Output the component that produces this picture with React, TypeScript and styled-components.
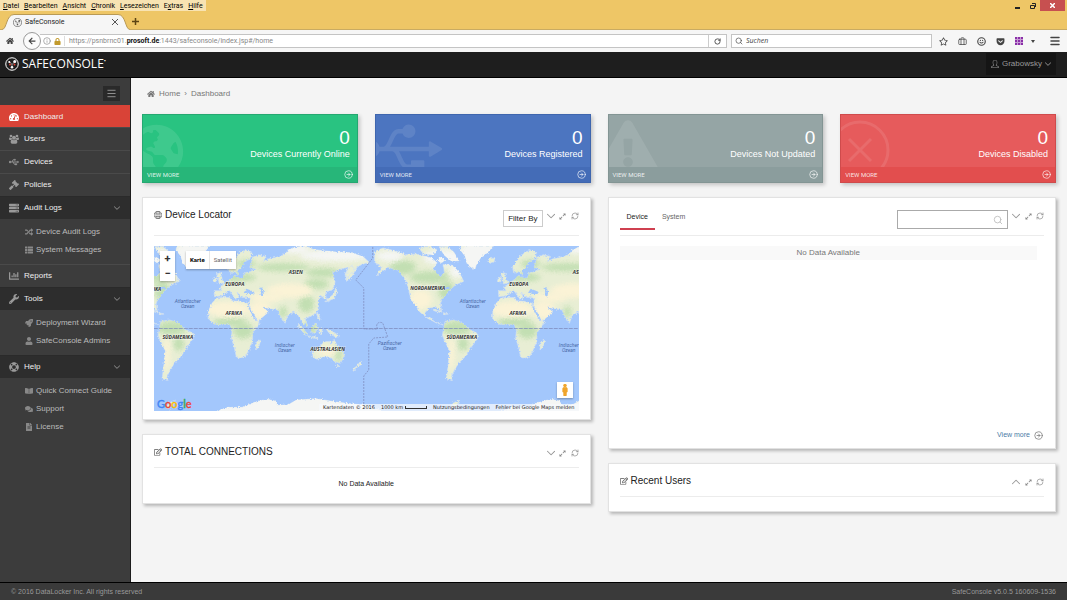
import React from 'react';
import styled, { createGlobalStyle, css } from 'styled-components';
import {
  FaTachometerAlt, FaUsb, FaGavel, FaServer, FaRandom, FaThList, FaChartBar, FaWrench,
  FaRocket, FaUser, FaLifeRing, FaBookOpen, FaComments, FaFileAlt, FaHome, FaGlobeAmericas,
  FaExclamationTriangle, FaExpandAlt, FaRegEdit, FaMale, FaArrowLeft, FaRegStar, FaGetPocket, FaLock,
} from 'react-icons/fa';
import { SlArrowDown, SlArrowUp, SlUser, SlGlobe } from 'react-icons/sl';
import { CircleArrowRight, RefreshCw, Search, Briefcase, Smile, Menu, RotateCw, Info } from 'lucide-react';

const SANS = '"Liberation Sans", Arial, sans-serif';
const UI = '"Open Sans", "Noto Sans", sans-serif';

const Global = createGlobalStyle`
  *, *::before, *::after { box-sizing: border-box; }
  body { margin: 0; background: #f4f4f4; font: 8px/12px ${SANS}; color: #333; }
  button, input { font: inherit; color: inherit; margin: 0; }
  button { background: none; border: 0; padding: 0; cursor: pointer; }
  a { color: inherit; text-decoration: none; }
  h2 { margin: 0; font-weight: normal; }
  ul { list-style: none; margin: 0; padding: 0; }
  svg { display: block; flex: none; }
`;

/* ---------- browser window ---------- */

const Window = styled.div`
  display: flex;
  flex-direction: column;
  min-height: 100vh;
`;

const Chrome = styled.div`
  background: #eec666;
  font-family: Roboto, ${UI};
  font-size: 7px;
  color: #222;
`;

const MenuBar = styled.div`
  display: flex;
  justify-content: space-between;
  height: 11px;
`;

const Menus = styled.nav`
  display: flex;
  gap: 5px;
  padding: 0 3px;
  background: #f8e3b2;
  line-height: 12px;
  color: #000;
  u { text-decoration-thickness: 1px; text-underline-offset: 1px; }
`;

const WindowControls = styled.div`
  display: flex;
  align-items: stretch;
  padding-right: 2px;
`;

const WindowButton = styled.button<{ $close?: boolean }>`
  display: flex;
  align-items: center;
  justify-content: center;
  width: ${p => (p.$close ? 25 : 15)}px;
  background: ${p => (p.$close ? '#c75050' : 'transparent')};
  color: ${p => (p.$close ? '#fff' : '#222')};
`;

const TabStrip = styled.div`
  display: flex;
  align-items: flex-end;
  gap: 2px;
  height: 19px;
  padding-left: 2px;
  border-bottom: 1px solid #c9ab62;
`;

const BrowserTab = styled.div`
  position: relative;
  display: flex;
  align-items: center;
  gap: 3px;
  width: 128px;
  height: 16px;
  margin-bottom: -1px;
  padding: 0 12px 0 11px;
  > * { position: relative; }
  span { flex: 1; }
`;

const TabShape = styled.svg`
  && { position: absolute; inset: 0; }
`;

const Toolbar = styled.div`
  display: flex;
  align-items: center;
  height: 22px;
  padding: 0 6px;
  background: #f6f6f6;
  color: #444;
`;

const BackButton = styled.button`
  display: flex;
  align-items: center;
  justify-content: center;
  width: 18px;
  height: 18px;
  margin-left: 9px;
  border: 1px solid #999;
  border-radius: 50%;
  background: #fbfbfb;
  z-index: 1;
`;

const AddressBar = styled.div`
  display: flex;
  align-items: center;
  flex: 1;
  gap: 3px;
  height: 14px;
  margin-left: -1px;
  padding-left: 3px;
  border: 1px solid #c4c4c4;
  border-left: 0;
  background: #fff;
  color: #888;
`;

const Address = styled.div`
  flex: 1;
  padding-left: 4px;
  border-left: 1px solid #ddd;
  line-height: 10px;
  white-space: nowrap;
  outline: 0;
  b { color: #111; }
`;

const Reload = styled.button`
  display: flex;
  align-items: center;
  justify-content: center;
  width: 18px;
  height: 12px;
  border-left: 1px solid #ccc;
  color: #444;
`;

const BrowserSearch = styled.label`
  display: flex;
  align-items: center;
  gap: 3px;
  width: 201px;
  height: 14px;
  margin: 0 7px 0 4px;
  padding: 0 3px;
  border: 1px solid #c4c4c4;
  background: #fff;
  input {
    flex: 1;
    min-width: 0;
    padding: 0;
    border: 0;
    outline: 0;
    font-family: ${UI};
    font-style: italic;
  }
`;

const ToolbarIcons = styled.div`
  display: flex;
  align-items: center;
  gap: 10px;
`;

const ListMenu = styled.span`
  display: flex;
  align-items: center;
  gap: 8px;
  padding-right: 4px;
`;

const Grid9 = styled.span`
  display: grid;
  grid-template-columns: repeat(3, 2px);
  gap: 1px;
  background: #c79ad4;
  i { height: 2px; background: #8a2fa8; }
`;

const Caret = styled.span`
  border: 2px solid transparent;
  border-top: 3px solid #444;
  border-bottom: 0;
`;

/* ---------- app header ---------- */

const Header = styled.header`
  display: flex;
  align-items: center;
  justify-content: space-between;
  height: 26px;
  padding: 0 11px 2px 5px;
  background: #1e1e1e;
  border-bottom: 1px solid #000;
`;

const Brand = styled.a`
  display: flex;
  align-items: center;
  gap: 3px;
  font: 12px/16px ${UI};
  color: #fff;
  sup { font-size: 6px; line-height: 6px; vertical-align: 5px; }
`;

const UserMenu = styled.button`
  display: flex;
  align-items: center;
  gap: 3px;
  height: 22px;
  padding: 0 5px;
  background: #151515;
  color: #999;
`;

/* ---------- sidebar ---------- */

const Body = styled.div`
  display: flex;
  flex: 1;
`;

const Sidebar = styled.nav`
  flex: none;
  width: 131px;
  background: #3c3c3c;
  border-right: 1px solid #1c1c1c;
  color: #eee;
`;

const ToggleRow = styled.div`
  display: flex;
  justify-content: flex-end;
  height: 27px;
  padding: 8px 10px 4px 0;
`;

const Toggle = styled.button`
  display: flex;
  align-items: center;
  justify-content: center;
  width: 17px;
  background: #2a2a2a;
  color: #999;
`;

const NavLink = styled.a<{ $state?: 'active' | 'open' }>`
  display: flex;
  align-items: center;
  gap: 5px;
  height: 23px;
  padding: 0 10px 0 9px;
  border-top: 1px solid #4a4a4a;
  > svg { color: #999; }
  span { flex: 1; }
  ${p => p.$state === 'open' && css`background: #2d2d2d; border-color: #2a2a2a;`}
  ${p => p.$state === 'active' && css`
    height: 22px;
    background: #d94337;
    border-color: #d94337;
    > svg { color: #fff; }
  `}
`;

const SubMenu = styled.ul`
  padding: 4px 0 5px;
`;

const SubLink = styled.a`
  display: flex;
  align-items: center;
  gap: 3px;
  height: 18px;
  padding-left: 25px;
  color: #bbb;
  svg { color: #888; }
`;

/* ---------- content ---------- */

const Main = styled.main`
  flex: 1;
  min-width: 0;
  padding: 10px 11px 20px;
`;

const Crumbs = styled.nav`
  display: flex;
  align-items: center;
  gap: 4px;
  padding: 0 5px;
  color: #777;
`;

const Cards = styled.div`
  display: grid;
  grid-template-columns: repeat(4, 1fr);
  gap: 17px;
  margin-top: 14px;
`;

const Card = styled.a<{ $bg: string; $edge: string }>`
  display: block;
  height: 69px;
  border: 1px solid ${p => p.$edge};
  background: ${p => p.$bg};
  box-shadow: 2px 2px 4px rgba(0, 0, 0, 0.2);
  color: #fff;
`;

const CardBody = styled.div`
  position: relative;
  overflow: hidden;
  height: 52px;
  padding: 13px 7px 0;
  text-align: right;
  font-size: 9px;
  strong { display: block; font-size: 19px; line-height: 20px; font-weight: normal; }
  span { position: relative; }
`;

const Watermark = styled.div<{ $x: number; $y: number }>`
  position: absolute;
  left: ${p => p.$x}px;
  top: ${p => p.$y}px;
  color: rgba(255, 255, 255, 0.1);
`;

const CardFoot = styled.div<{ $bg: string }>`
  display: flex;
  align-items: center;
  justify-content: space-between;
  height: 15px;
  padding: 0 4px;
  background: ${p => p.$bg};
  font: 6px/8px Roboto, ${SANS};
  color: rgba(255, 255, 255, 0.85);
`;

const Columns = styled.div`
  display: grid;
  grid-template-columns: 1fr 1fr;
  align-items: start;
  gap: 17px;
  margin-top: 14px;
`;

const Column = styled.div`
  display: grid;
  gap: 14px;
  min-width: 0;
`;

const Panel = styled.section<{ $min?: number }>`
  display: flex;
  flex-direction: column;
  min-height: ${p => p.$min ?? 0}px;
  padding: 0 11px;
  background: #fff;
  border: 1px solid #e2e2e2;
  box-shadow: 2px 2px 3px rgba(0, 0, 0, 0.25);
`;

const PanelHead = styled.div<{ $tall?: boolean }>`
  display: flex;
  align-items: flex-start;
  min-height: ${p => (p.$tall ? 38 : 33)}px;
  padding: 11px 0 4px;
  border-bottom: 1px solid #ececec;
`;

const PanelTitle = styled.h2`
  display: flex;
  align-items: center;
  flex: 1;
  gap: 3px;
  font-size: 10px;
  line-height: 12px;
  color: #222;
  svg { color: #555; }
`;

const Tools = styled.div`
  display: flex;
  gap: 4px;
  margin: 3px 0 0 4px;
  color: #888;
  button { display: grid; place-items: center; width: 8px; height: 8px; }
`;

const FilterButton = styled.button`
  height: 17px;
  margin-top: 1px;
  padding: 0 4px;
  border: 1px solid #ccc;
  color: #222;
`;

const Tabs = styled.div`
  display: flex;
  flex: 1;
  font-size: 7px;
`;

const PanelTab = styled.button<{ $on?: boolean }>`
  height: 21px;
  padding: 0 7px 4px;
  color: ${p => (p.$on ? '#222' : '#666')};
  border-bottom: 2px solid ${p => (p.$on ? '#cf4050' : 'transparent')};
`;

const PanelSearch = styled.label`
  display: flex;
  align-items: center;
  width: 111px;
  height: 19px;
  margin-top: 1px;
  padding: 0 4px;
  border: 1px solid #aaa;
  color: #bbb;
  input { flex: 1; min-width: 0; border: 0; outline: 0; padding: 0; color: #333; }
`;

const DataTable = styled.table`
  margin: 10px 7px 0 0;
  border-collapse: collapse;
  td { height: 14px; padding: 0; text-align: center; background: #f9f9f9; color: #777; }
`;

const Empty = styled.p`
  margin: 0;
  padding: 10px 0 13px;
  text-align: center;
  font-size: 7px;
  color: #222;
`;

const ViewMore = styled.a`
  display: flex;
  align-items: center;
  justify-content: flex-end;
  gap: 4px;
  margin: auto 1px 7px 0;
  font-size: 7px;
  color: #4a7ba6;
  svg { color: #777; }
`;

const Footer = styled.footer`
  display: flex;
  align-items: center;
  justify-content: space-between;
  height: 18px;
  padding: 0 11px;
  border-top: 1px solid #000;
  background: #3a3a3a;
  font-size: 7px;
  color: #999;
`;

/* ---------- map ---------- */

const MapBox = styled.div`
  position: relative;
  height: 165px;
  margin: 10px 0 8px;
  overflow: hidden;
  background: #a3c7fc;
  > svg { width: 100%; height: 100%; }
`;

const ZoomControl = styled.div`
  position: absolute;
  left: 6px;
  top: 5px;
  display: grid;
  width: 15px;
  background: #fff;
  box-shadow: 0 1px 2px rgba(0, 0, 0, 0.3);
  button { height: 15px; font: bold 11px/15px Roboto, sans-serif; color: #333; }
`;

const MapTypes = styled.div`
  position: absolute;
  left: 32px;
  top: 5px;
  display: flex;
  height: 18px;
  background: #fff;
  box-shadow: 0 1px 2px rgba(0, 0, 0, 0.3);
  font: 6px/8px Roboto, sans-serif;
  button { padding: 0 4px; color: #666; }
  button:first-child { font-weight: bold; color: #000; border-right: 1px solid #e6e6e6; }
`;

const StreetView = styled.button`
  position: absolute;
  right: 6px;
  bottom: 13px;
  display: flex;
  align-items: center;
  justify-content: center;
  width: 16px;
  height: 16px;
  background: #fff;
  box-shadow: 0 1px 2px rgba(0, 0, 0, 0.3);
`;

const GoogleMark = styled.a`
  position: absolute;
  left: 3px;
  bottom: 1px;
  font: 500 11px/13px Lato, sans-serif;
  -webkit-text-stroke: 0.3px currentColor;
`;

const Letter = styled.span<{ $c: string }>`
  color: ${p => p.$c};
`;

const Attribution = styled.div`
  position: absolute;
  right: 0;
  bottom: 0;
  display: flex;
  gap: 6px;
  height: 7px;
  padding: 0 4px;
  background: rgba(245, 248, 252, 0.75);
  font: 5px/7px "DejaVu Sans", sans-serif;
  color: #222;
  white-space: nowrap;
`;

const Scale = styled.span`
  display: flex;
  align-items: center;
  gap: 2px;
  &::after {
    content: '';
    width: 22px;
    height: 3px;
    border: 1px solid #333;
    border-top: 0;
  }
`;

/* Land outlines on a grid three times finer than the map, one world every 853 units. */
const LAND = [
  // Africa
  'M200 172L188 186 177 208 175 233 192 250 215 252 240 250 247 268 245 292 253 318 260 350 272 353 288 346 300 322 309 300 308 278 333 242 317 240 303 208 294 188 268 182 246 180 242 171 222 170Z',
  // Eurasia with Arabia, India and Indochina
  'M194 168L193 150 216 150 209 138 226 130 239 118 250 110 255 104 262 113 280 112 287 96 302 92 318 86 300 80 306 64 308 50 328 42 350 48 340 62 358 54 380 50 404 42 414 30 432 20 470 16 490 26 520 30 560 34 605 36 640 48 660 66 638 70 622 80 604 112 590 122 586 100 596 80 570 86 548 94 556 124 548 148 527 154 530 178 512 164 504 180 508 205 490 224 466 234 474 256 458 246 444 222 430 214 414 226 406 248 392 226 384 208 362 204 340 200 356 214 324 242 310 214 298 194 302 172 276 170 262 154 268 172 258 176 240 150 228 156 212 166Z',
  // Scandinavia
  'M238 92L236 78 250 58 268 36 292 28 308 38 300 56 284 62 276 84 264 104 256 92 246 98Z',
  // British Isles, Iceland, Japan, Kamchatka
  'M208 130L206 112 200 100 212 96 218 118 224 126Z', 'M190 122L194 110 202 112 200 124Z',
  'M162 58L170 50 182 54 180 64 168 68Z', 'M528 184L540 170 552 160 558 140 562 152 552 174Z',
  'M588 118L592 92 606 74 614 86Z',
  // Indonesia, Philippines, New Guinea
  'M446 248L474 280 468 284 446 258Z', 'M478 286L506 290 504 294 478 290Z', 'M482 262L500 248 504 262 496 278 484 274Z',
  'M508 264L518 264 514 282 508 278Z', 'M500 216L508 222 512 240 504 234Z', 'M530 266L548 272 570 286 560 290 540 280Z',
  // Australia, Tasmania, New Zealand, Madagascar
  'M488 330L510 318 522 304 540 302 544 312 553 296 562 314 578 328 584 346 572 368 552 362 546 352 526 348 502 356 490 350Z',
  'M560 374L568 374 564 380Z', 'M632 362L636 370 622 380 612 392 608 386 622 376Z', 'M318 306L332 298 328 318 318 328Z',
  // North America
  'M675 32L700 22 735 30 770 42 800 40 846 52 862 66 850 84 872 110 884 96 880 72 910 74 930 98 942 122 916 134 896 152 876 178 872 190 876 214 862 200 838 202 826 216 828 230 846 232 852 242 872 250 880 252 862 248 832 232 810 214 796 190 784 178 778 152 768 118 744 88 714 80 680 106 696 80 674 64Z',
  // Arctic archipelago and Greenland
  'M808 22L840 16 862 28 850 42 820 40Z', 'M868 18L890 16 912 34 928 60 906 62 884 44Z',
  'M934 14L1034 14 1018 34 996 46 972 86 954 72 946 46 932 28Z',
  'M862 60L872 50 886 58 876 66Z',
  // Cuba and Hispaniola
  'M850 206L876 212 874 216 852 210Z', 'M880 216L896 220 884 222Z',
  // South America
  'M886 242L912 238 938 246 954 262 986 280 978 302 960 326 948 346 928 366 914 388 904 410 908 420 890 414 894 384 900 330 886 304 878 284 882 262Z',
  // Antarctica
  'M190 516L236 500 280 500 316 484 350 476 374 480 386 494 416 492 440 478 500 474 560 484 610 490 650 494 690 508 720 530H190Z',
  'M903 498L912 486 930 478 922 492 912 506Z',
].join('');

const GREENS: [number, number, number, number][] = [
  [290, 70, 30, 12], [270, 110, 50, 12], [400, 80, 80, 12], [520, 96, 50, 14], [500, 130, 36, 16], [470, 190, 24, 26],
  [240, 244, 50, 14], [280, 270, 30, 24], [480, 262, 20, 20], [760, 80, 40, 22], [840, 110, 60, 18], [890, 150, 24, 30],
  [920, 262, 44, 22], [940, 310, 16, 20], [566, 340, 10, 26], [400, 214, 12, 18],
];
const SANDS: [number, number, number, number][] = [
  [235, 206, 64, 24], [330, 208, 34, 28], [420, 150, 70, 22], [350, 170, 50, 14], [812, 176, 34, 30], [532, 332, 30, 14], [904, 340, 10, 50],
];
const WHITES: [number, number, number, number][] = [
  [985, 46, 60, 48], [420, 502, 300, 38], [560, 44, 110, 18], [440, 26, 40, 14], [880, 50, 60, 24], [920, 92, 20, 20], [720, 46, 40, 16],
];

const World = ({ shift }: { shift: number }) => (
  <g transform={`translate(${shift} 0)`}>
    <g filter="url(#coast)">
      <path d={LAND} fill="#e8eed4" stroke="#cfe0f6" strokeWidth="2" />
      <g clipPath="url(#land)">
        {GREENS.map(([x, y, rx, ry], i) => <ellipse key={i} cx={x} cy={y} rx={rx} ry={ry} fill="#c2dfb2" filter="url(#soft)" />)}
        {SANDS.map(([x, y, rx, ry], i) => <ellipse key={i} cx={x} cy={y} rx={rx} ry={ry} fill="#fbf3d6" filter="url(#soft)" />)}
        {WHITES.map(([x, y, rx, ry], i) => <ellipse key={i} cx={x} cy={y} rx={rx} ry={ry} fill="#f5f6f4" filter="url(#soft)" />)}
      </g>
      <g fill="#a3c7fc">
        <path d="M282 156L290 144 300 148 314 154 310 160 292 160Z" />
        <path d="M328 142L338 140 342 156 340 168 332 164 334 152Z" />
        <path d="M262 92L276 82 282 70 288 74 284 92 268 98Z" />
        <path d="M294 190L316 230 312 232 292 194Z" />
        <path d="M340 196L352 206 344 204Z" />
        <path d="M880 140L898 138 900 144 884 148Z" />
      </g>
    </g>
  </g>
);

const PLACES: [number, number, string][] = [
  [-10, 45, 'NORDAMERIKA'], [24, 93, 'SÜDAMERIKA'], [80, 69, 'AFRIKA'], [81, 40, 'EUROPA'], [142, 28, 'ASIEN'], [174, 105, 'AUSTRALASIEN'],
  [274, 44, 'NORDAMERIKA'], [308, 93, 'SÜDAMERIKA'], [364, 69, 'AFRIKA'], [365, 40, 'EUROPA'], [426, 28, 'ASIEN'],
];
const OCEANS: [number, number, string][] = [
  [34, 57, 'Atlantischer'], [131, 101, 'Indischer'], [236, 99, 'Pazifischer'], [319, 57, 'Atlantischer'], [415, 101, 'Indischer'],
];

const WorldMap = () => (
  <svg viewBox="0 0 425 165" preserveAspectRatio="xMidYMid slice" role="img" aria-label="Weltkarte">
    <defs>
      <filter id="coast" x="-5%" y="-5%" width="110%" height="110%">
        <feTurbulence type="fractalNoise" baseFrequency="0.2" numOctaves="3" seed="4" />
        <feDisplacementMap in="SourceGraphic" scale="11" xChannelSelector="R" yChannelSelector="G" />
      </filter>
      <filter id="soft" x="-50%" y="-50%" width="200%" height="200%"><feGaussianBlur stdDeviation="8" /></filter>
      <clipPath id="land"><path d={LAND} /></clipPath>
    </defs>
    <g transform="scale(0.3333) translate(-12 -16)">
      <World shift={-853} />
      <World shift={0} />
      <World shift={853} />
    </g>
    <g fill="none" stroke="#7b86b8" strokeWidth="0.7" strokeDasharray="2 1">
      <path d="M0 82.500H425" strokeDasharray="4 1" />
      <path d="M219 1V12L202 34 210 42V83H224C221 78 225 75 229 77L234 91 220 92 215 98V124L210 130V160" />
    </g>
    <g textAnchor="middle" fontFamily="Open Sans, sans-serif" fontSize="5" fontStyle="italic">
      <g fontWeight="700" fill="#333" stroke="#fff" strokeOpacity="0.5" strokeWidth="1" paintOrder="stroke">
        {PLACES.map(([x, y, t]) => <text key={t + x} x={x} y={y}>{t}</text>)}
      </g>
      <g fill="#4a6aa8" fontFamily="Roboto, sans-serif">
        {OCEANS.map(([x, y, t]) => (
          <text key={t + x} x={x} y={y}>{t}<tspan x={x} dy="5">Ozean</tspan></text>
        ))}
      </g>
    </g>
  </svg>
);

/* ---------- pieces ---------- */

const LogoMark = ({ size, color, accent }: { size: number; color: string; accent: string }) => (
  <svg width={size} height={size} viewBox="0 0 28 28" fill="none" stroke={color} aria-hidden="true">
    <circle cx="14" cy="14" r="12.500" strokeWidth="2" />
    <path d="M9 9L14 15 20 9M14 15V21" strokeWidth="1" />
    <circle cx="8.500" cy="10" r="2" fill={color} stroke="none" />
    <circle cx="19.500" cy="9" r="3" fill={color} stroke="none" />
    <circle cx="14" cy="20.500" r="2.500" fill={color} stroke="none" />
    <circle cx="10" cy="15" r="2" fill={accent} stroke="none" />
    <circle cx="19" cy="15" r="2" fill={accent} stroke="none" />
  </svg>
);

const PeopleIcon = () => (
  <svg width="10" height="10" viewBox="0 0 30 28" fill="currentColor" aria-hidden="true">
    <circle cx="6" cy="5" r="4" />
    <circle cx="24" cy="5" r="4" />
    <path d="M0 14C0 11 1 9 3 9.500 5 11 7 11 9 10 8 12 9 14 10 15 8 15 7 16 6 17H3C1 17 0 16 0 14Z" />
    <path d="M30 14C30 11 29 9 27 9.500 25 11 23 11 21 10 22 12 21 14 20 15 22 15 23 16 24 17H27C29 17 30 16 30 14Z" />
    <circle cx="15" cy="10" r="6" />
    <path d="M5 23C5 18 7 15 10 15.500 13 18 17 18 20 15.500 23 15 25 18 25 23 25 26 23 28 21 28H9C7 28 5 26 5 23Z" />
  </svg>
);

const PanelTools = ({ up }: { up?: boolean }) => {
  const Arrow = up ? SlArrowUp : SlArrowDown;
  return (
    <Tools>
      <button aria-label={up ? 'Expand' : 'Collapse'}><Arrow size={8} stroke="currentColor" strokeWidth={40} /></button>
      <button aria-label="Full screen"><FaExpandAlt size={7} /></button>
      <button aria-label="Refresh"><RefreshCw size={8} /></button>
    </Tools>
  );
};

const stats = [
  { label: 'Devices Currently Online', bg: '#29c381', edge: '#25a871', foot: '#27b679', x: -14, y: 9, icon: <FaGlobeAmericas size={55} /> },
  { label: 'Devices Registered', bg: '#4c75c0', edge: '#3f66ae', foot: '#446cb7', x: -14, y: 2, icon: <FaUsb size={80} style={{ height: 64 }} /> },
  { label: 'Devices Not Updated', bg: '#95a5a5', edge: '#839594', foot: '#8b9d9d', x: -11, y: 2, icon: <FaExclamationTriangle size={60} /> },
  {
    label: 'Devices Disabled', bg: '#e65b5c', edge: '#cf4b4c', foot: '#e24e4e', x: -11, y: 5,
    icon: (
      <svg width="60" height="60" viewBox="0 0 60 60" fill="none" stroke="currentColor" strokeWidth="3">
        <circle cx="30" cy="30" r="28" />
        <path d="M19 19L41 41M41 19L19 41" />
      </svg>
    ),
  },
];

type Item = { label: string; icon: React.ReactNode; state?: 'active' | 'open'; sub?: { label: string; icon: React.ReactNode }[] };
const nav: Item[] = [
  { label: 'Dashboard', icon: <FaTachometerAlt size={10} />, state: 'active' },
  { label: 'Users', icon: <PeopleIcon /> },
  { label: 'Devices', icon: <FaUsb size={10} stroke="currentColor" strokeWidth={20} /> },
  { label: 'Policies', icon: <FaGavel size={10} /> },
  {
    label: 'Audit Logs', icon: <FaServer size={10} />, state: 'open',
    sub: [{ label: 'Device Audit Logs', icon: <FaRandom size={8} /> }, { label: 'System Messages', icon: <FaThList size={8} /> }],
  },
  { label: 'Reports', icon: <FaChartBar size={10} /> },
  {
    label: 'Tools', icon: <FaWrench size={10} />, state: 'open',
    sub: [{ label: 'Deployment Wizard', icon: <FaRocket size={8} /> }, { label: 'SafeConsole Admins', icon: <FaUser size={8} /> }],
  },
  {
    label: 'Help', icon: <FaLifeRing size={10} />, state: 'open',
    sub: [
      { label: 'Quick Connect Guide', icon: <FaBookOpen size={8} /> },
      { label: 'Support', icon: <FaComments size={8} /> },
      { label: 'License', icon: <FaFileAlt size={8} /> },
    ],
  },
];

const menus = ['Datei', 'Bearbeiten', 'Ansicht', 'Chronik', 'Lesezeichen', 'Extras', 'Hilfe'];
const google: [string, string][] = [['G', '#4285f4'], ['o', '#ea4335'], ['o', '#fbbc05'], ['g', '#4285f4'], ['l', '#34a853'], ['e', '#ea4335']];

export default function App() {
  return (
    <Window>
      <Global />
      <Chrome>
        <MenuBar>
          <Menus>
            {menus.map(m => {
              const k = m === 'Extras' ? 1 : 0;
              return <span key={m}>{m.slice(0, k)}<u>{m[k]}</u>{m.slice(k + 1)}</span>;
            })}
          </Menus>
          <WindowControls>
            <WindowButton aria-label="Minimize"><svg width="5" height="6"><path d="M0 5H5" stroke="currentColor" strokeWidth="2" /></svg></WindowButton>
            <WindowButton aria-label="Restore">
              <svg width="6" height="6" fill="none" stroke="currentColor"><path d="M.5 2.500H4.500V5.500H.5ZM2 .5H5.500V4" /></svg>
            </WindowButton>
            <WindowButton $close aria-label="Close"><svg width="5" height="5"><path d="M0 0L5 5M5 0L0 5" stroke="currentColor" strokeWidth="1.500" /></svg></WindowButton>
          </WindowControls>
        </MenuBar>
        <TabStrip>
          <BrowserTab>
            <TabShape width="128" height="16" viewBox="0 0 128 16">
              <path d="M0 15.500C5 15.500 4 .5 12 .5H116C124 .5 123 15.500 128 15.500V16H0Z" fill="#f6f6f6" />
              <path d="M0 15.500C5 15.500 4 .5 12 .5H116C124 .5 123 15.500 128 15.500" fill="none" stroke="#b99a55" />
            </TabShape>
            <LogoMark size={9} color="#555" accent="#888" />
            <span>SafeConsole</span>
            <button aria-label="Close tab"><svg width="6" height="6"><path d="M0 0L6 6M6 0L0 6" stroke="#555" /></svg></button>
          </BrowserTab>
          <button aria-label="New tab"><svg width="7" height="13"><path d="M3.500 2V9M0 5.500H7" stroke="#5c4413" strokeWidth="1.500" /></svg></button>
        </TabStrip>
        <Toolbar>
          <FaHome size={8} />
          <BackButton aria-label="Back"><FaArrowLeft size={8} /></BackButton>
          <AddressBar>
            <Info size={8} />
            <FaLock size={7} color="#c29a2c" />
            <Address role="textbox" aria-label="Address" contentEditable suppressContentEditableWarning spellCheck={false}>
              https://psnbrnc01.<b>prosoft.de</b>:1443/safeconsole/index.jsp#/home
            </Address>
            <Reload aria-label="Reload"><RotateCw size={7} strokeWidth={3} /></Reload>
          </AddressBar>
          <BrowserSearch>
            <Search size={8} />
            <input aria-label="Suchen" defaultValue="Suchen" />
          </BrowserSearch>
          <ToolbarIcons>
            <FaRegStar size={9} />
            <Briefcase size={9} />
            <Smile size={9} strokeWidth={3} />
            <FaGetPocket size={9} />
            <ListMenu>
              <Grid9>{Array.from({ length: 9 }, (_, i) => <i key={i} />)}</Grid9>
              <Caret />
            </ListMenu>
            <Menu size={12} strokeWidth={3} />
          </ToolbarIcons>
        </Toolbar>
      </Chrome>

      <Header>
        <Brand href="#/home">
          <LogoMark size={14} color="#fff" accent="#d94337" />
          <span>SAFECONSOLE<sup>•</sup></span>
        </Brand>
        <UserMenu><SlUser size={8} />Grabowsky<SlArrowDown size={6} stroke="currentColor" strokeWidth={50} /></UserMenu>
      </Header>

      <Body>
        <Sidebar>
          <ToggleRow><Toggle aria-label="Toggle menu"><Menu size={11} strokeWidth={2} /></Toggle></ToggleRow>
          {nav.map(n => (
            <React.Fragment key={n.label}>
              <NavLink href="#" $state={n.state}>
                {n.icon}<span>{n.label}</span>{n.sub && <SlArrowDown size={6} stroke="currentColor" strokeWidth={50} />}
              </NavLink>
              {n.sub && (
                <SubMenu>
                  {n.sub.map(s => <li key={s.label}><SubLink href="#">{s.icon}{s.label}</SubLink></li>)}
                </SubMenu>
              )}
            </React.Fragment>
          ))}
        </Sidebar>

        <Main>
          <Crumbs>
            <FaHome size={8} /><a href="#/home">Home</a><span>›</span><span>Dashboard</span>
          </Crumbs>

          <Cards>
            {stats.map(s => (
              <Card key={s.label} href="#" $bg={s.bg} $edge={s.edge}>
                <CardBody>
                  <Watermark $x={s.x} $y={s.y}>{s.icon}</Watermark>
                  <strong>0</strong>
                  <span>{s.label}</span>
                </CardBody>
                <CardFoot $bg={s.foot}>VIEW MORE<CircleArrowRight size={9} /></CardFoot>
              </Card>
            ))}
          </Cards>

          <Columns>
            <Column>
              <Panel>
                <PanelHead $tall>
                  <PanelTitle><SlGlobe size={8} />Device Locator</PanelTitle>
                  <FilterButton>Filter By</FilterButton>
                  <PanelTools />
                </PanelHead>
                <MapBox>
                  <WorldMap />
                  <ZoomControl><button>+</button><button>−</button></ZoomControl>
                  <MapTypes><button>Karte</button><button>Satellit</button></MapTypes>
                  <StreetView aria-label="Street View"><FaMale size={12} color="#f0a52c" stroke="#f0a52c" strokeWidth={30} /></StreetView>
                  <GoogleMark href="#">{google.map(([l, c], i) => <Letter key={i} $c={c}>{l}</Letter>)}</GoogleMark>
                  <Attribution>
                    <span>Kartendaten © 2016</span><Scale>1000 km</Scale>
                    <a href="#">Nutzungsbedingungen</a><a href="#">Fehler bei Google Maps melden</a>
                  </Attribution>
                </MapBox>
              </Panel>
              <Panel>
                <PanelHead>
                  <PanelTitle><FaRegEdit size={8} />TOTAL CONNECTIONS</PanelTitle>
                  <PanelTools />
                </PanelHead>
                <Empty>No Data Available</Empty>
              </Panel>
            </Column>

            <Column>
              <Panel $min={252}>
                <PanelHead $tall>
                  <Tabs role="tablist">
                    <PanelTab role="tab" aria-selected $on>Device</PanelTab>
                    <PanelTab role="tab">System</PanelTab>
                  </Tabs>
                  <PanelSearch>
                    <input aria-label="Search devices" />
                    <Search size={10} />
                  </PanelSearch>
                  <PanelTools />
                </PanelHead>
                <DataTable><tbody><tr><td>No Data Available</td></tr></tbody></DataTable>
                <ViewMore href="#">View more<CircleArrowRight size={9} /></ViewMore>
              </Panel>
              <Panel $min={49}>
                <PanelHead>
                  <PanelTitle><FaRegEdit size={8} />Recent Users</PanelTitle>
                  <PanelTools up />
                </PanelHead>
              </Panel>
            </Column>
          </Columns>
        </Main>
      </Body>

      <Footer>
        <span>© 2016 DataLocker Inc. All rights reserved</span>
        <span>SafeConsole v5.0.5 160609-1536</span>
      </Footer>
    </Window>
  );
}
